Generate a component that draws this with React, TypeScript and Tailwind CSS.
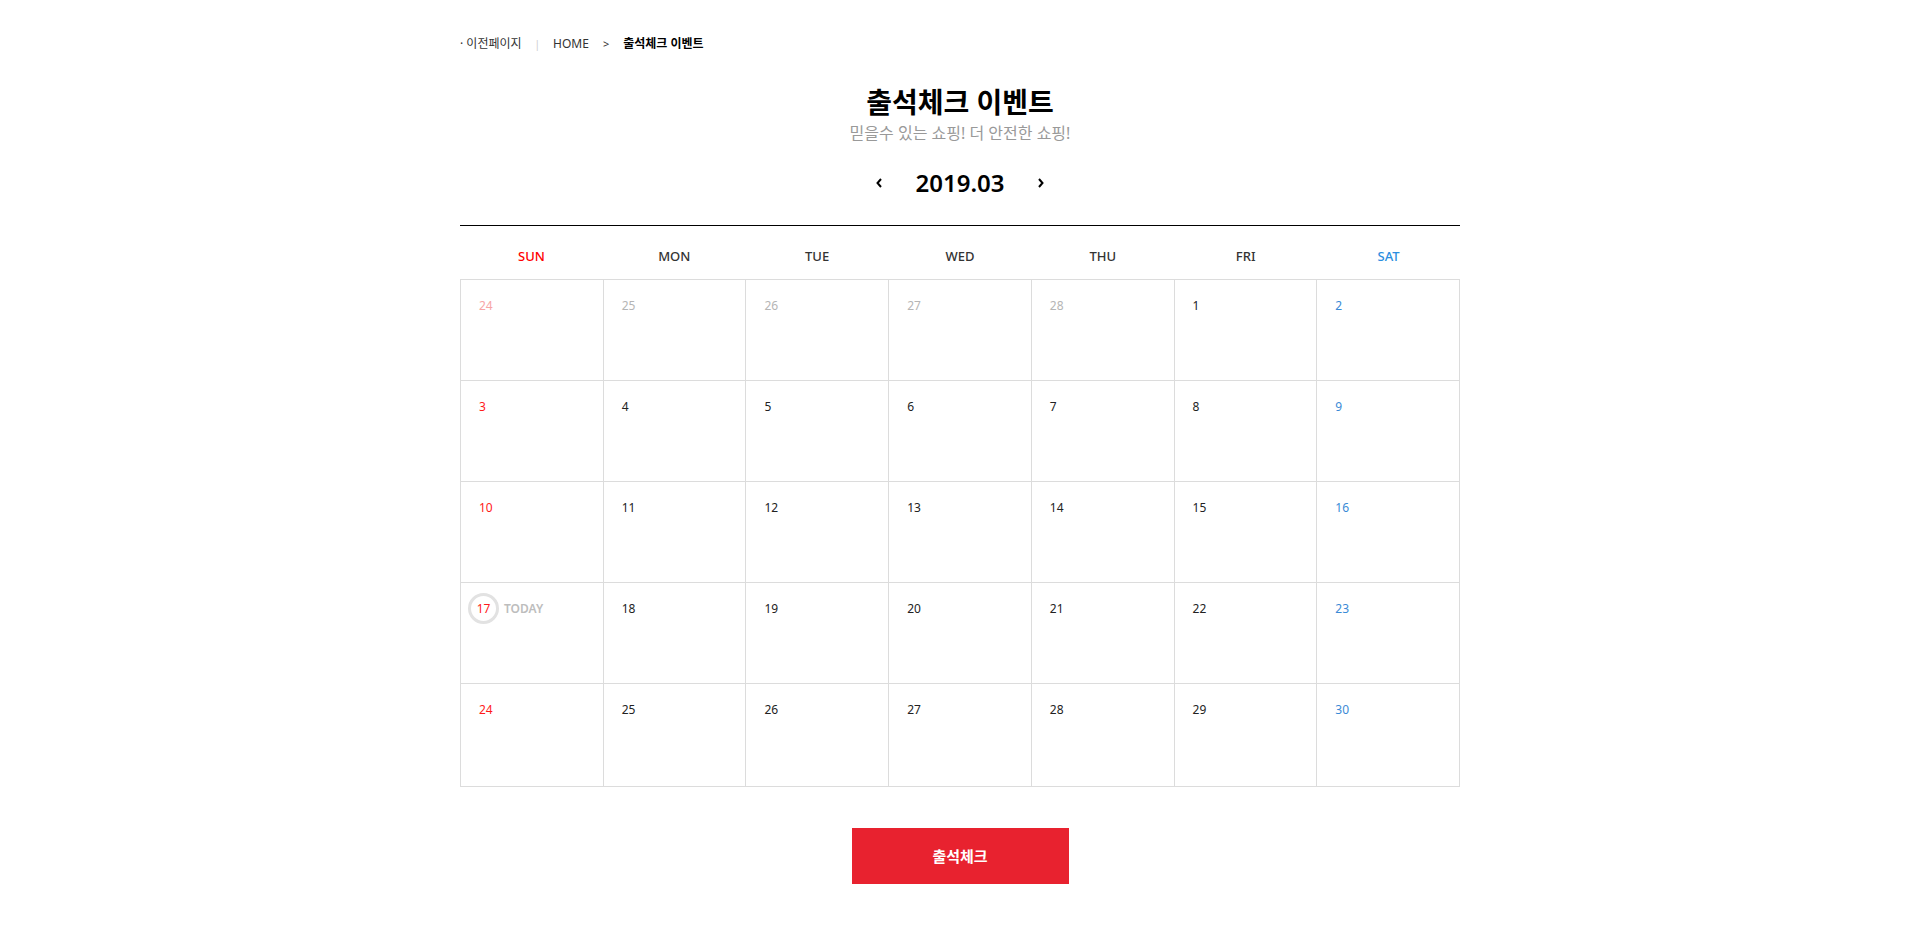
import React from 'react';

type Day = { n: number; muted?: boolean; today?: boolean };

const weekNames = ['SUN', 'MON', 'TUE', 'WED', 'THU', 'FRI', 'SAT'];

const weeks: Day[][] = [
  [
    { n: 24, muted: true },
    { n: 25, muted: true },
    { n: 26, muted: true },
    { n: 27, muted: true },
    { n: 28, muted: true },
    { n: 1 },
    { n: 2 },
  ],
  [3, 4, 5, 6, 7, 8, 9].map((n) => ({ n })),
  [10, 11, 12, 13, 14, 15, 16].map((n) => ({ n })),
  [{ n: 17, today: true }, ...[18, 19, 20, 21, 22, 23].map((n) => ({ n }))],
  [24, 25, 26, 27, 28, 29, 30].map((n) => ({ n })),
];

const dayColor = (col: number, muted?: boolean) => {
  if (muted) return col === 0 ? 'text-[#f7a5a5]' : 'text-[#b5b5b5]';
  if (col === 0) return 'text-[#ff1a1a]';
  if (col === 6) return 'text-[#3a8ad6]';
  return 'text-[#222]';
};

export default function App() {
  return (
    <div className="min-h-screen bg-white pl-[15px] font-['Noto_Sans','Noto_Sans_CJK_KR',sans-serif]">
      <div className="mx-auto w-[1000px] pt-[35px] pb-[52px]">
        {/* breadcrumb */}
        <div className="flex items-center text-[12px] leading-[18px] text-[#333]">
          <span>· 이전페이지</span>
          <span className="ml-[13px] text-[#ccc] text-[10px]">|</span>
          <span className="ml-[13px]">HOME</span>
          <span className="ml-[14px] text-[11px]">&gt;</span>
          <span className="ml-[14px] font-bold text-black">출석체크 이벤트</span>
        </div>

        {/* title */}
        <h1 className="mt-[30px] text-center text-[28px] leading-[38px] font-bold text-black">출석체크 이벤트</h1>
        <p className="mt-[1px] text-center text-[16px] leading-[22px] text-[#999]">믿을수 있는 쇼핑! 더 안전한 쇼핑!</p>

        {/* month nav */}
        <div className="mt-[22px] flex items-center justify-center">
          <button className="flex h-[24px] w-[24px] items-center justify-center text-black">
            <svg width="9" height="12" viewBox="0 0 9 12" fill="none">
              <path d="M6 2L2.5 6L6 10" stroke="#000" strokeWidth="2" />
            </svg>
          </button>
          <div className="mx-[24px] text-[24px] leading-[34px] font-semibold text-black">2019.03</div>
          <button className="flex h-[24px] w-[24px] items-center justify-center text-black">
            <svg width="9" height="12" viewBox="0 0 9 12" fill="none">
              <path d="M3 2L6.5 6L3 10" stroke="#000" strokeWidth="2" />
            </svg>
          </button>
        </div>

        {/* calendar */}
        <div className="mt-[25px] border-t border-black">
          <div className="grid h-[53px] grid-cols-7 pt-[20px]">
            {weekNames.map((w, i) => (
              <div
                key={w}
                className={`text-center text-[13px] leading-[20px] font-medium ${
                  i === 0 ? 'text-[#ff0000]' : i === 6 ? 'text-[#2a8ee0]' : 'text-[#333]'
                }`}
              >
                {w}
              </div>
            ))}
          </div>
          <div className="grid grid-cols-7 border-t border-l border-[#dcdcdc]">
            {weeks.map((week, wi) =>
              week.map((d, ci) => (
                <div
                  key={`${wi}-${ci}`}
                  className={`border-r border-b border-[#dcdcdc] ${wi === 4 ? 'h-[103px]' : 'h-[101px]'}`}
                >
                  {d.today ? (
                    <div className="flex items-center pl-[7px] pt-[10px]">
                      <div className="flex h-[31px] w-[31px] items-center justify-center rounded-full border-[3px] border-[#e2e2e2] text-[12px] text-[#ff1a1a]">
                        {d.n}
                      </div>
                      <span className="ml-[5px] text-[12px] font-semibold text-[#bdbdbd]">TODAY</span>
                    </div>
                  ) : (
                    <div className={`pl-[18px] pt-[17px] text-[12px] leading-[18px] ${dayColor(ci, d.muted)}`}>{d.n}</div>
                  )}
                </div>
              ))
            )}
          </div>
        </div>

        {/* button */}
        <div className="mt-[41px] flex justify-center">
          <button className="h-[56px] w-[217px] bg-[#e8222f] text-[15px] font-semibold text-white">출석체크</button>
        </div>
      </div>
    </div>
  );
}
